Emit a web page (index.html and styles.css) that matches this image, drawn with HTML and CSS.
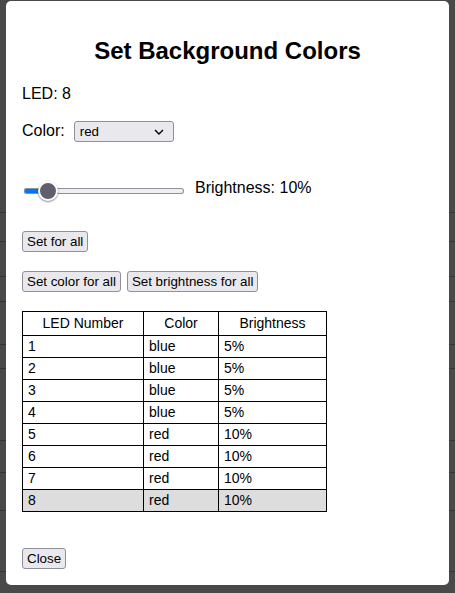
FILE: index.html
```html
<!DOCTYPE html>
<html lang="en">
<head>
<meta charset="utf-8">
<title>Set Background Colors</title>
<link rel="stylesheet" href="styles.css">
</head>
<body>
<div class="backdrop">
  <div class="bg-line h" style="top:212px"></div>
  <div class="bg-line h" style="top:241px"></div>
  <div class="bg-line h" style="top:276px"></div>
  <div class="bg-line h" style="top:301px"></div>
  <div class="bg-line h" style="top:344px"></div>
  <div class="bg-line h" style="top:368px"></div>
  <div class="bg-line h" style="top:440px"></div>
  <div class="bg-line h" style="top:472px"></div>
  <div class="bg-line h" style="top:510px"></div>
  <div class="bg-line h" style="top:571px"></div>
</div>
<div class="modal">
  <h2 class="title">Set Background Colors</h2>
  <p class="led">LED: 8</p>
  <div class="color-row">
    <label class="label" for="color">Color:</label>
    <div class="select-wrap">
      <select id="color" class="select">
        <option>red</option>
        <option>green</option>
        <option>blue</option>
      </select>
      <svg class="chev" width="10" height="6" viewBox="0 0 10 6"><path d="M1 1l4 4 4-4" fill="none" stroke="#000" stroke-width="1.4"/></svg>
    </div>
  </div>
  <div class="slider-row">
    <input class="range" type="range" min="0" max="100" value="10">
    <span class="bright">Brightness: 10%</span>
  </div>
  <div class="btn-row first">
    <button class="btn">Set for all</button>
  </div>
  <div class="btn-row second">
    <button class="btn">Set color for all</button>
    <button class="btn">Set brightness for all</button>
  </div>
  <table class="leds">
    <thead>
      <tr><th class="c1">LED Number</th><th class="c2">Color</th><th class="c3">Brightness</th></tr>
    </thead>
    <tbody>
      <tr><td>1</td><td>blue</td><td>5%</td></tr>
      <tr><td>2</td><td>blue</td><td>5%</td></tr>
      <tr><td>3</td><td>blue</td><td>5%</td></tr>
      <tr><td>4</td><td>blue</td><td>5%</td></tr>
      <tr><td>5</td><td>red</td><td>10%</td></tr>
      <tr><td>6</td><td>red</td><td>10%</td></tr>
      <tr><td>7</td><td>red</td><td>10%</td></tr>
      <tr class="selected"><td>8</td><td>red</td><td>10%</td></tr>
    </tbody>
  </table>
  <div class="close-row">
    <button class="btn">Close</button>
  </div>
</div>
</body>
</html>
```
FILE: styles.css
```css
* { box-sizing: border-box; }
html, body {
  margin: 0;
  padding: 0;
  width: 455px;
  height: 593px;
  overflow: hidden;
}
body {
  background: #494949;
  font-family: "Liberation Sans", Arial, sans-serif;
  color: #000;
  position: relative;
}
.backdrop {
  position: absolute;
  inset: 0;
}
.bg-line.h {
  position: absolute;
  left: 0;
  right: 0;
  height: 1px;
  background: #343434;
}
.modal {
  position: absolute;
  left: 6px;
  top: 1px;
  width: 443px;
  height: 584px;
  background: #fff;
  border-radius: 5px;
  padding: 16px 16px 16px 16px;
  display: flex;
  flex-direction: column;
  align-items: flex-start;
}
.title {
  align-self: stretch;
  margin: 20px 0 0 0;
  font-size: 24px;
  line-height: 28px;
  font-weight: bold;
  text-align: center;
}
.led {
  margin: 20px 0 0 0;
  font-size: 16px;
  line-height: 18px;
}
.color-row {
  margin-top: 18px;
  display: flex;
  align-items: center;
  gap: 9px;
  height: 21px;
}
.label {
  font-size: 16px;
  line-height: 18px;
  padding-bottom: 1px;
}
.select-wrap {
  position: relative;
  width: 100px;
  height: 21px;
}
.select {
  -webkit-appearance: none;
  appearance: none;
  width: 100px;
  height: 21px;
  margin: 0;
  padding: 0 0 0 5px;
  border: 1px solid #8f8f9d;
  border-radius: 3px;
  background: #e9e9ed;
  font-family: "Liberation Sans", Arial, sans-serif;
  font-size: 13.33px;
  color: #000;
}
.chev {
  position: absolute;
  right: 10px;
  top: 8px;
  pointer-events: none;
}
.slider-row {
  margin-top: 37px;
  display: flex;
  align-items: center;
  height: 24px;
}
.range {
  -webkit-appearance: none;
  appearance: none;
  width: 160px;
  height: 20px;
  margin: 0 0 0 2px;
  background: transparent;
}
.range::-webkit-slider-runnable-track {
  height: 6px;
  border-radius: 3px;
  background: linear-gradient(to right, #0075ff 0, #0075ff 24px, #efefef 24px);
  box-shadow: inset 0 0 0 1px #8f8f9d;
}
.range::-webkit-slider-thumb {
  -webkit-appearance: none;
  appearance: none;
  width: 20px;
  height: 20px;
  margin-top: -7px;
  border-radius: 50%;
  background: #5f5f6e;
  border: 2px solid #fff;
  box-shadow: 0 1px 2px rgba(0,0,0,0.45);
}
.bright {
  margin-left: 11px;
  font-size: 16px;
  line-height: 18px;
  padding-bottom: 6px;
}
.btn-row {
  display: flex;
  gap: 6px;
}
.btn-row.first { margin-top: 28px; }
.btn-row.second { margin-top: 19px; }
.btn {
  height: 21px;
  margin: 0;
  padding: 1px 4px;
  border: 1px solid #8f8f9d;
  border-radius: 3px;
  background: #e9e9ed;
  font-family: "Liberation Sans", Arial, sans-serif;
  font-size: 13.33px;
  line-height: 17px;
  color: #000;
}
.leds {
  margin-top: 19px;
  border-collapse: collapse;
  width: 304px;
  font-size: 14px;
  table-layout: fixed;
}
.leds th, .leds td {
  border: 1px solid #000;
  padding: 2px 5px;
  line-height: 17px;
  font-weight: normal;
}
.leds th {
  padding: 3px 5px;
  text-align: center;
}
.leds td { text-align: left; }
.c1 { width: 121px; }
.c2 { width: 75px; }
.c3 { width: 108px; }
.leds tr.selected td { background: #dddddd; }
.close-row {
  margin-top: 36px;
}
```
